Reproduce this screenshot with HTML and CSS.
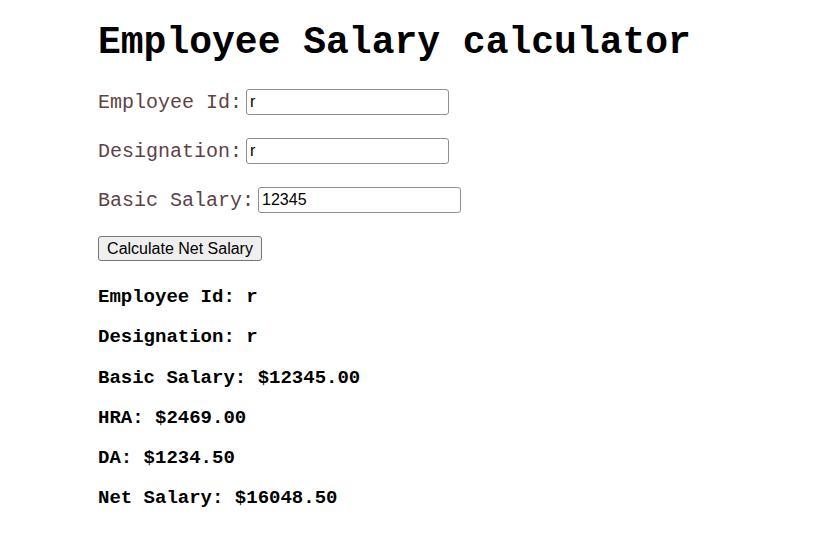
FILE: index.html
```html
<!DOCTYPE html>
<html>
<head>
	<title>Employee Salary calculator</title>
	<link rel="stylesheet" href="styles.css">
</head>
<body>
	<div class="page">
		<h1 class="title">Employee Salary calculator</h1>
		<form class="calc">
			<div class="row">
				<label class="lbl" for="empId">Employee Id:</label>
				<input class="field" type="text" id="empId" value="r">
			</div>
			<div class="row">
				<label class="lbl" for="desig">Designation:</label>
				<input class="field" type="text" id="desig" value="r">
			</div>
			<div class="row">
				<label class="lbl" for="basic">Basic Salary:</label>
				<input class="field" type="text" id="basic" value="12345">
			</div>
			<button class="btn" type="button">Calculate Net Salary</button>
		</form>
		<div class="result">
			<p>Employee Id: r</p>
			<p>Designation: r</p>
			<p>Basic Salary: $12345.00</p>
			<p>HRA: $2469.00</p>
			<p>DA: $1234.50</p>
			<p>Net Salary: $16048.50</p>
		</div>
	</div>
</body>
</html>
```

FILE: styles.css
```css
body{
	margin: 0;
	background: #fff;
	font-family: "Liberation Mono", "Courier New", monospace;
	color: #000;
}
.page{
	padding: 21px 0 0 98px;
}
.title{
	margin: 0 0 25px;
	font-size: 38px;
	line-height: 43px;
	font-weight: bold;
}
.row{
	display: flex;
	align-items: center;
	height: 26px;
	margin-bottom: 23px;
}
.lbl{
	font-size: 20px;
	color: #5e4246;
	margin-right: 4px;
}
.field{
	box-sizing: border-box;
	width: 203px;
	height: 26px;
	margin: 0;
	padding: 1px 3px;
	border: 1px solid #8f8f8f;
	border-radius: 3px;
	font-family: "Liberation Sans", Arial, sans-serif;
	font-size: 16px;
	color: #000;
}
.btn{
	box-sizing: border-box;
	display: block;
	width: 164px;
	height: 25px;
	margin: 1px 0 0;
	padding: 1px 6px;
	background: #efefef;
	border: 1px solid #767676;
	border-radius: 3px;
	font-family: "Liberation Sans", Arial, sans-serif;
	font-size: 16px;
	color: #000;
}
.result{
	margin-top: 26px;
}
.result p{
	margin: 0 0 19px;
	font-size: 19px;
	line-height: 21.3px;
	font-weight: bold;
}
```
